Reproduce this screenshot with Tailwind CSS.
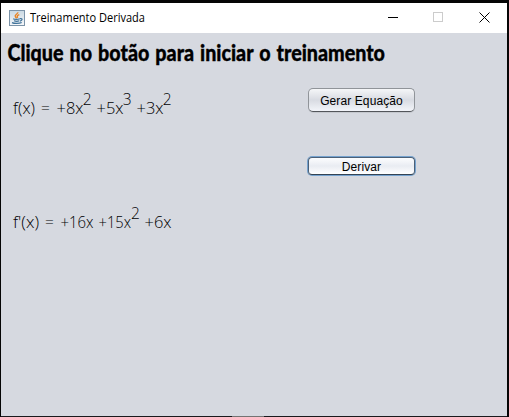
<!DOCTYPE html>
<html lang="pt-BR"><head><meta charset="utf-8"><title>Treinamento Derivada</title>
<script src="https://cdn.jsdelivr.net/npm/@tailwindcss/browser@4"></script></head>
<body class="w-[509px] h-[417px] overflow-hidden bg-black">
<div class="w-[509px] h-[417px] pt-[3px] pl-px pr-[2px] flex flex-col bg-[#050505]">
<header class="h-[30px] shrink-0 bg-white flex items-center">
<svg class="ml-2 size-4 shrink-0" viewBox="0 0 16 16"><defs><linearGradient id="b" x2="0" y2="1"><stop stop-color="#c9d8e2"/><stop offset="1" stop-color="#f7f8fa"/></linearGradient></defs>
<rect x=".5" y=".5" width="15" height="15" fill="url(#b)" stroke="#7b93a8"/><path d="M8.8 2.2C9.3 4 5.3 4.7 6.3 6.5L7.6 8.3M10.3 4.6C8.2 5.4 7.7 6.2 8.9 7.7" fill="none" stroke="#e98424" stroke-width="1.4"/><path d="M4.2 8.8C5.5 9.6 9 9.6 10.8 8.8M5 10.8C6.6 11.4 8.7 11.4 10.3 10.8M3 12.6C5 13.7 10.5 13.7 12.7 12.5M11 8.7C14 8 13.5 10.4 11 11.1" fill="none" stroke="#40739a" stroke-width="1.2"/></svg>
<svg class="ml-[5px] w-[140px] h-[30px] shrink-0 overflow-visible" font-family="'Open Sans','Noto Sans',sans-serif" font-size="12"><text x="0" y="19" textLength="115" lengthAdjust="spacingAndGlyphs">Treinamento Derivada</text></svg>
<svg class="ml-auto mr-[17px] w-[102px] h-[30px]" fill="none" shape-rendering="crispEdges"><path d="M0 14.5h10" stroke="#000"/><rect x="45.5" y="9.5" width="9" height="9" stroke="#ccc"/><path d="M91.5 9.5l10 10M101.5 9.5l-10 10" stroke="#000" shape-rendering="auto"/></svg>
</header>
<main class="h-[383px] bg-[#d6d9e0] flex flex-col">
<svg class="h-[40px] w-full shrink-0" font-family="Lato,sans-serif" font-weight="900" font-size="22.5" stroke="#000" stroke-width=".35"><text x="6.5" y="27.5" textLength="377.5" lengthAdjust="spacingAndGlyphs" word-spacing="1.5">Clique no botão para iniciar o treinamento</text></svg>
<div class="flex">
<section class="w-[306px] flex flex-col">
<svg class="w-full h-[114px]" fill="#000" font-family="'Open Sans',sans-serif" font-weight="300" font-size="15.5"><text x="12" y="41" textLength="22" lengthAdjust="spacingAndGlyphs">f(x)</text><text x="40" y="41">=</text><text x="55.5" y="41" textLength="27" lengthAdjust="spacingAndGlyphs">+8x</text><text x="81.8" y="31.5">2</text><text x="95.5" y="41" textLength="27" lengthAdjust="spacingAndGlyphs">+5x</text><text x="121.8" y="31.5">3</text><text x="135.5" y="41" textLength="27" lengthAdjust="spacingAndGlyphs">+3x</text><text x="161.8" y="31.5">2</text></svg>
<svg class="w-full h-[80px]" fill="#000" font-family="'Open Sans',sans-serif" font-weight="300" font-size="15.5"><text x="12" y="41" textLength="26" lengthAdjust="spacingAndGlyphs">f'(x)</text><text x="44" y="41">=</text><text x="59.5" y="41" textLength="33" lengthAdjust="spacingAndGlyphs">+16x</text><text x="97.5" y="41" textLength="32.5" lengthAdjust="spacingAndGlyphs">+15x</text><text x="130" y="31.5">2</text><text x="143.5" y="41" textLength="27" lengthAdjust="spacingAndGlyphs">+6x</text></svg>
</section>
<section class="pt-[15px] font-['Liberation_Sans',sans-serif] text-[12px] text-black">
<button class="ml-px w-[107px] h-[24px] rounded-[5px] border border-[#909499] border-b-[#53565b] bg-linear-to-b from-[#f5f6f8] via-[#d8dbe2] to-[#f3f5fa] flex items-center justify-center tracking-[0.1px] pt-[2px] whitespace-nowrap shadow-[0_1px_0_#c5c8ce]">Gerar Equação</button>
<button class="ml-px mt-[45px] w-[107px] h-[18px] rounded-[4px] border border-[#4b6078] border-b-[#354454] bg-linear-to-b from-[#fcfdfe] via-[#e9ecf2] to-white flex items-center justify-center tracking-[0.1px] pt-[2px] shadow-[0_0_0_1px_#75a2ce]">Derivar</button>
</section></div>
</main>
<footer class="h-px flex bg-[#19191d]"><div class="ml-[231px] w-8 bg-[#737373]"></div></footer>
</div></body></html>
